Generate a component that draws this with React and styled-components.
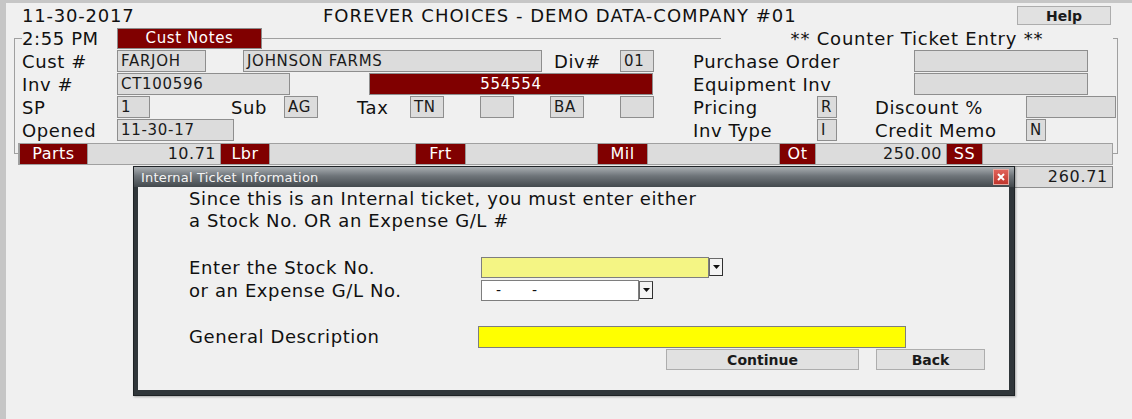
import styled, { createGlobalStyle } from 'styled-components';

const GlobalStyle = createGlobalStyle`
  html, body {
    margin: 0;
    padding: 0;
    background: #f0f0f0;
  }
  body {
    font-family: 'DejaVu Sans', 'Liberation Sans', sans-serif;
    color: #111;
  }
`;

const Screen = styled.div`
  position: relative;
  width: 1132px;
  height: 419px;
  box-sizing: border-box;
  border-top: 3px solid #c6c6c6;
  border-left: 6px solid #c6c6c6;
  background: #f0f0f0;
  overflow: hidden;
`;

const Header = styled.div`
  display: flex;
  align-items: center;
  height: 25px;
  padding-left: 16px;
  font-size: 18px;
  letter-spacing: 0.8px;
`;

const DateText = styled.div`
  width: 301px;
`;

const CompanyTitle = styled.div`
  white-space: nowrap;
  letter-spacing: 1px;
`;

const GrayButton = styled.button`
  box-sizing: border-box;
  width: ${(p) => p.$w}px;
  height: ${(p) => p.$h || 21}px;
  margin-left: ${(p) => (p.$auto ? 'auto' : `${p.$ml || 0}px`)};
  margin-right: ${(p) => p.$mr || 0}px;
  padding: 0;
  border: 1px solid #adadad;
  background: #e1e1e1;
  font-family: 'DejaVu Sans', sans-serif;
  font-weight: bold;
  font-size: 14px;
  color: #1a1a1a;
`;

const GroupBox = styled.div`
  box-sizing: border-box;
  width: 1104px;
  margin: 10px 0 0 8px;
  border: 1px solid #a0a0a0;
`;

const LegendRow = styled.div`
  display: flex;
  align-items: center;
  height: 21px;
  margin-top: -11px;
`;

const TimeLabel = styled.div`
  width: 95px;
  margin-left: 7px;
  height: 21px;
  line-height: 21px;
  background: #f0f0f0;
  font-size: 18px;
  letter-spacing: 0.6px;
`;

const NotesButton = styled.div`
  box-sizing: border-box;
  width: 145px;
  height: 21px;
  line-height: 19px;
  text-align: center;
  background: #800000;
  border: 1px solid #8c8c8c;
  color: #fff;
  font-size: 15px;
  letter-spacing: 0.6px;
`;

const Spacer = styled.div`
  flex: 1;
`;

const Caption = styled.div`
  width: 392px;
  margin-right: 4px;
  height: 21px;
  line-height: 21px;
  text-align: center;
  background: #f0f0f0;
  font-size: 18px;
  letter-spacing: 0.8px;
`;

const Row = styled.div`
  display: flex;
  align-items: flex-start;
  height: 23px;
  padding-left: 7px;
  margin-top: ${(p) => p.$mt || 0}px;
`;

const Label = styled.div`
  width: ${(p) => p.$w}px;
  margin-left: ${(p) => p.$ml || 0}px;
  height: 23px;
  line-height: 23px;
  font-size: 18px;
  letter-spacing: 0.6px;
  white-space: nowrap;
`;

const Field = styled.div`
  box-sizing: border-box;
  width: ${(p) => p.$w}px;
  margin-left: ${(p) => p.$ml || 0}px;
  height: 22px;
  line-height: 20px;
  padding: 0 3px;
  border: 1px solid #8e8e8e;
  background: ${(p) => (p.$red ? '#800000' : '#dcdcdc')};
  color: ${(p) => (p.$red ? '#fff' : '#1a1a1a')};
  text-align: ${(p) => (p.$red ? 'center' : 'left')};
  font-size: 15px;
  letter-spacing: 0.7px;
  white-space: nowrap;
  overflow: hidden;
`;

const BarRow = styled.div`
  display: flex;
  box-sizing: border-box;
  width: 1095px;
  height: 22px;
  margin: 1px 0 -12px 3px;
  border: 1px solid #a0a0a0;
  background: #dcdcdc;
`;

const BarCell = styled.div`
  box-sizing: border-box;
  width: ${(p) => p.$w}px;
  height: 20px;
  line-height: 20px;
  padding: 0 4px;
  font-size: 16px;
  letter-spacing: 0.5px;
  background: ${(p) => (p.$red ? '#800000' : '#dcdcdc')};
  color: ${(p) => (p.$red ? '#fff' : '#1a1a1a')};
  text-align: ${(p) => (p.$red ? 'center' : 'right')};
  border-left: ${(p) => (p.$red ? '1px solid #9a9a9a' : 'none')};
  border-right: ${(p) => (p.$red ? '1px solid #9a9a9a' : 'none')};
`;

const TotalRow = styled.div`
  display: flex;
  justify-content: flex-end;
  margin-top: 12px;
  padding-right: 19px;
`;

const TotalField = styled(Field)`
  text-align: right;
  padding-right: 4px;
  font-size: 16px;
`;

const Dialog = styled.div`
  position: absolute;
  left: 127px;
  top: 163px;
  width: 882px;
  height: 230px;
  box-sizing: border-box;
  display: flex;
  flex-direction: column;
  background: #30363a;
  border: 1px solid #1e2225;
  box-shadow: 1px 1px 2px rgba(0, 0, 0, 0.3);
`;

const TitleBar = styled.div`
  display: flex;
  align-items: center;
  height: 20px;
  padding: 0 5px 0 7px;
  background: linear-gradient(#a9aeb2, #6e7479 45%, #43494d);
  color: #f4f4f4;
  font-size: 13px;
  letter-spacing: 0.2px;
`;

const CloseButton = styled.div`
  margin-left: auto;
  box-sizing: border-box;
  width: 16px;
  height: 16px;
  display: flex;
  align-items: center;
  justify-content: center;
  background: linear-gradient(#e0625a, #c0352c);
  border: 1px solid #e8a8a0;
`;

const DialogBody = styled.div`
  flex: 1;
  margin: 0 5px 5px 4px;
  padding: 1px 0 0 51px;
  background: #f0f0f0;
  font-size: 18px;
  letter-spacing: 0.6px;
`;

const Message = styled.div`
  line-height: 22px;
  margin-bottom: 25px;
`;

const FormRow = styled.div`
  display: flex;
  align-items: flex-start;
  height: ${(p) => p.$h || 22}px;
  margin-top: ${(p) => p.$mt || 0}px;
`;

const FormLabel = styled.div`
  width: 292px;
  height: 22px;
  line-height: 22px;
  white-space: nowrap;
`;

const ComboBox = styled.div`
  display: flex;
  align-items: flex-start;
`;

const ComboInput = styled.div`
  box-sizing: border-box;
  width: ${(p) => p.$w}px;
  height: ${(p) => p.$h || 21}px;
  margin-left: ${(p) => p.$ml || 0}px;
  border: 1px solid #7e7e7e;
  background: ${(p) => p.$bg};
  font-size: 14px;
  line-height: 19px;
  padding-left: 14px;
  white-space: pre;
`;

const DropButton = styled.div`
  box-sizing: border-box;
  width: 14px;
  height: 18px;
  margin-top: 1px;
  display: flex;
  align-items: center;
  justify-content: center;
  background: #f4f4f4;
  border: 1px solid #6a6a6a;
  border-right-color: #303030;
  border-bottom-color: #303030;
`;

const ButtonRow = styled.div`
  display: flex;
  justify-content: flex-end;
  gap: 17px;
  margin-top: 1px;
  padding-right: 24px;
`;

function Arrow() {
  return (
    <svg width="7" height="4" viewBox="0 0 7 4">
      <polygon points="0,0 7,0 3.5,4" fill="#111" />
    </svg>
  );
}

function Combo({ width, bg, children }) {
  return (
    <ComboBox>
      <ComboInput $w={width} $bg={bg}>
        {children}
      </ComboInput>
      <DropButton>
        <Arrow />
      </DropButton>
    </ComboBox>
  );
}

export default function App() {
  return (
    <>
      <GlobalStyle />
      <Screen>
        <Header>
          <DateText>11-30-2017</DateText>
          <CompanyTitle>FOREVER CHOICES - DEMO DATA-COMPANY #01</CompanyTitle>
          <GrayButton $w={94} $h={19} $auto $mr={21}>
            Help
          </GrayButton>
        </Header>

        <GroupBox>
          <LegendRow>
            <TimeLabel>2:55 PM</TimeLabel>
            <NotesButton>Cust Notes</NotesButton>
            <Spacer />
            <Caption>** Counter Ticket Entry **</Caption>
          </LegendRow>

          <Row $mt={1}>
            <Label $w={95}>Cust #</Label>
            <Field $w={89}>FARJOH</Field>
            <Field $w={299} $ml={37}>JOHNSON FARMS</Field>
            <Label $w={66} $ml={12}>Div#</Label>
            <Field $w={34}>01</Field>
            <Label $w={221} $ml={39}>Purchase Order</Label>
            <Field $w={174} />
          </Row>
          <Row>
            <Label $w={95}>Inv #</Label>
            <Field $w={173}>CT100596</Field>
            <Field $w={284} $ml={79} $red>554554</Field>
            <Label $w={221} $ml={40}>Equipment Inv</Label>
            <Field $w={174} />
          </Row>
          <Row>
            <Label $w={95}>SP</Label>
            <Field $w={33}>1</Field>
            <Label $w={53} $ml={81}>Sub</Label>
            <Field $w={34}>AG</Field>
            <Label $w={53} $ml={39}>Tax</Label>
            <Field $w={34}>TN</Field>
            <Field $w={34} $ml={36} />
            <Field $w={34} $ml={36}>BA</Field>
            <Field $w={34} $ml={36} />
            <Label $w={124} $ml={39}>Pricing</Label>
            <Field $w={20}>R</Field>
            <Label $w={151} $ml={38}>Discount %</Label>
            <Field $w={90} />
          </Row>
          <Row>
            <Label $w={95}>Opened</Label>
            <Field $w={117}>11-30-17</Field>
            <Label $w={124} $ml={459}>Inv Type</Label>
            <Field $w={20}>I</Field>
            <Label $w={151} $ml={38}>Credit Memo</Label>
            <Field $w={20}>N</Field>
          </Row>

          <BarRow>
            <BarCell $w={69} $red>Parts</BarCell>
            <BarCell $w={132}>10.71</BarCell>
            <BarCell $w={50} $red>Lbr</BarCell>
            <BarCell $w={145} />
            <BarCell $w={51} $red>Frt</BarCell>
            <BarCell $w={131} />
            <BarCell $w={51} $red>Mil</BarCell>
            <BarCell $w={131} />
            <BarCell $w={37} $red>Ot</BarCell>
            <BarCell $w={130}>250.00</BarCell>
            <BarCell $w={37} $red>SS</BarCell>
            <BarCell $w={129} />
          </BarRow>
        </GroupBox>

        <TotalRow>
          <TotalField $w={128}>260.71</TotalField>
        </TotalRow>

        <Dialog>
          <TitleBar>
            Internal Ticket Information
            <CloseButton>
              <svg width="8" height="8" viewBox="0 0 8 8">
                <path d="M1 1L7 7M7 1L1 7" stroke="#fff" strokeWidth="2" />
              </svg>
            </CloseButton>
          </TitleBar>
          <DialogBody>
            <Message>
              Since this is an Internal ticket, you must enter either
              <br />
              a Stock No. OR an Expense G/L #
            </Message>
            <FormRow $h={23}>
              <FormLabel>Enter the Stock No.</FormLabel>
              <Combo width={228} bg="#f4f584" />
            </FormRow>
            <FormRow>
              <FormLabel>or an Expense G/L No.</FormLabel>
              <Combo width={158} bg="#ffffff">{'-      -'}</Combo>
            </FormRow>
            <FormRow $mt={24}>
              <FormLabel>General Description</FormLabel>
              <ComboInput $w={428} $h={22} $ml={-3} $bg="#ffff00" />
            </FormRow>
            <ButtonRow>
              <GrayButton $w={193}>Continue</GrayButton>
              <GrayButton $w={109}>Back</GrayButton>
            </ButtonRow>
          </DialogBody>
        </Dialog>
      </Screen>
    </>
  );
}
